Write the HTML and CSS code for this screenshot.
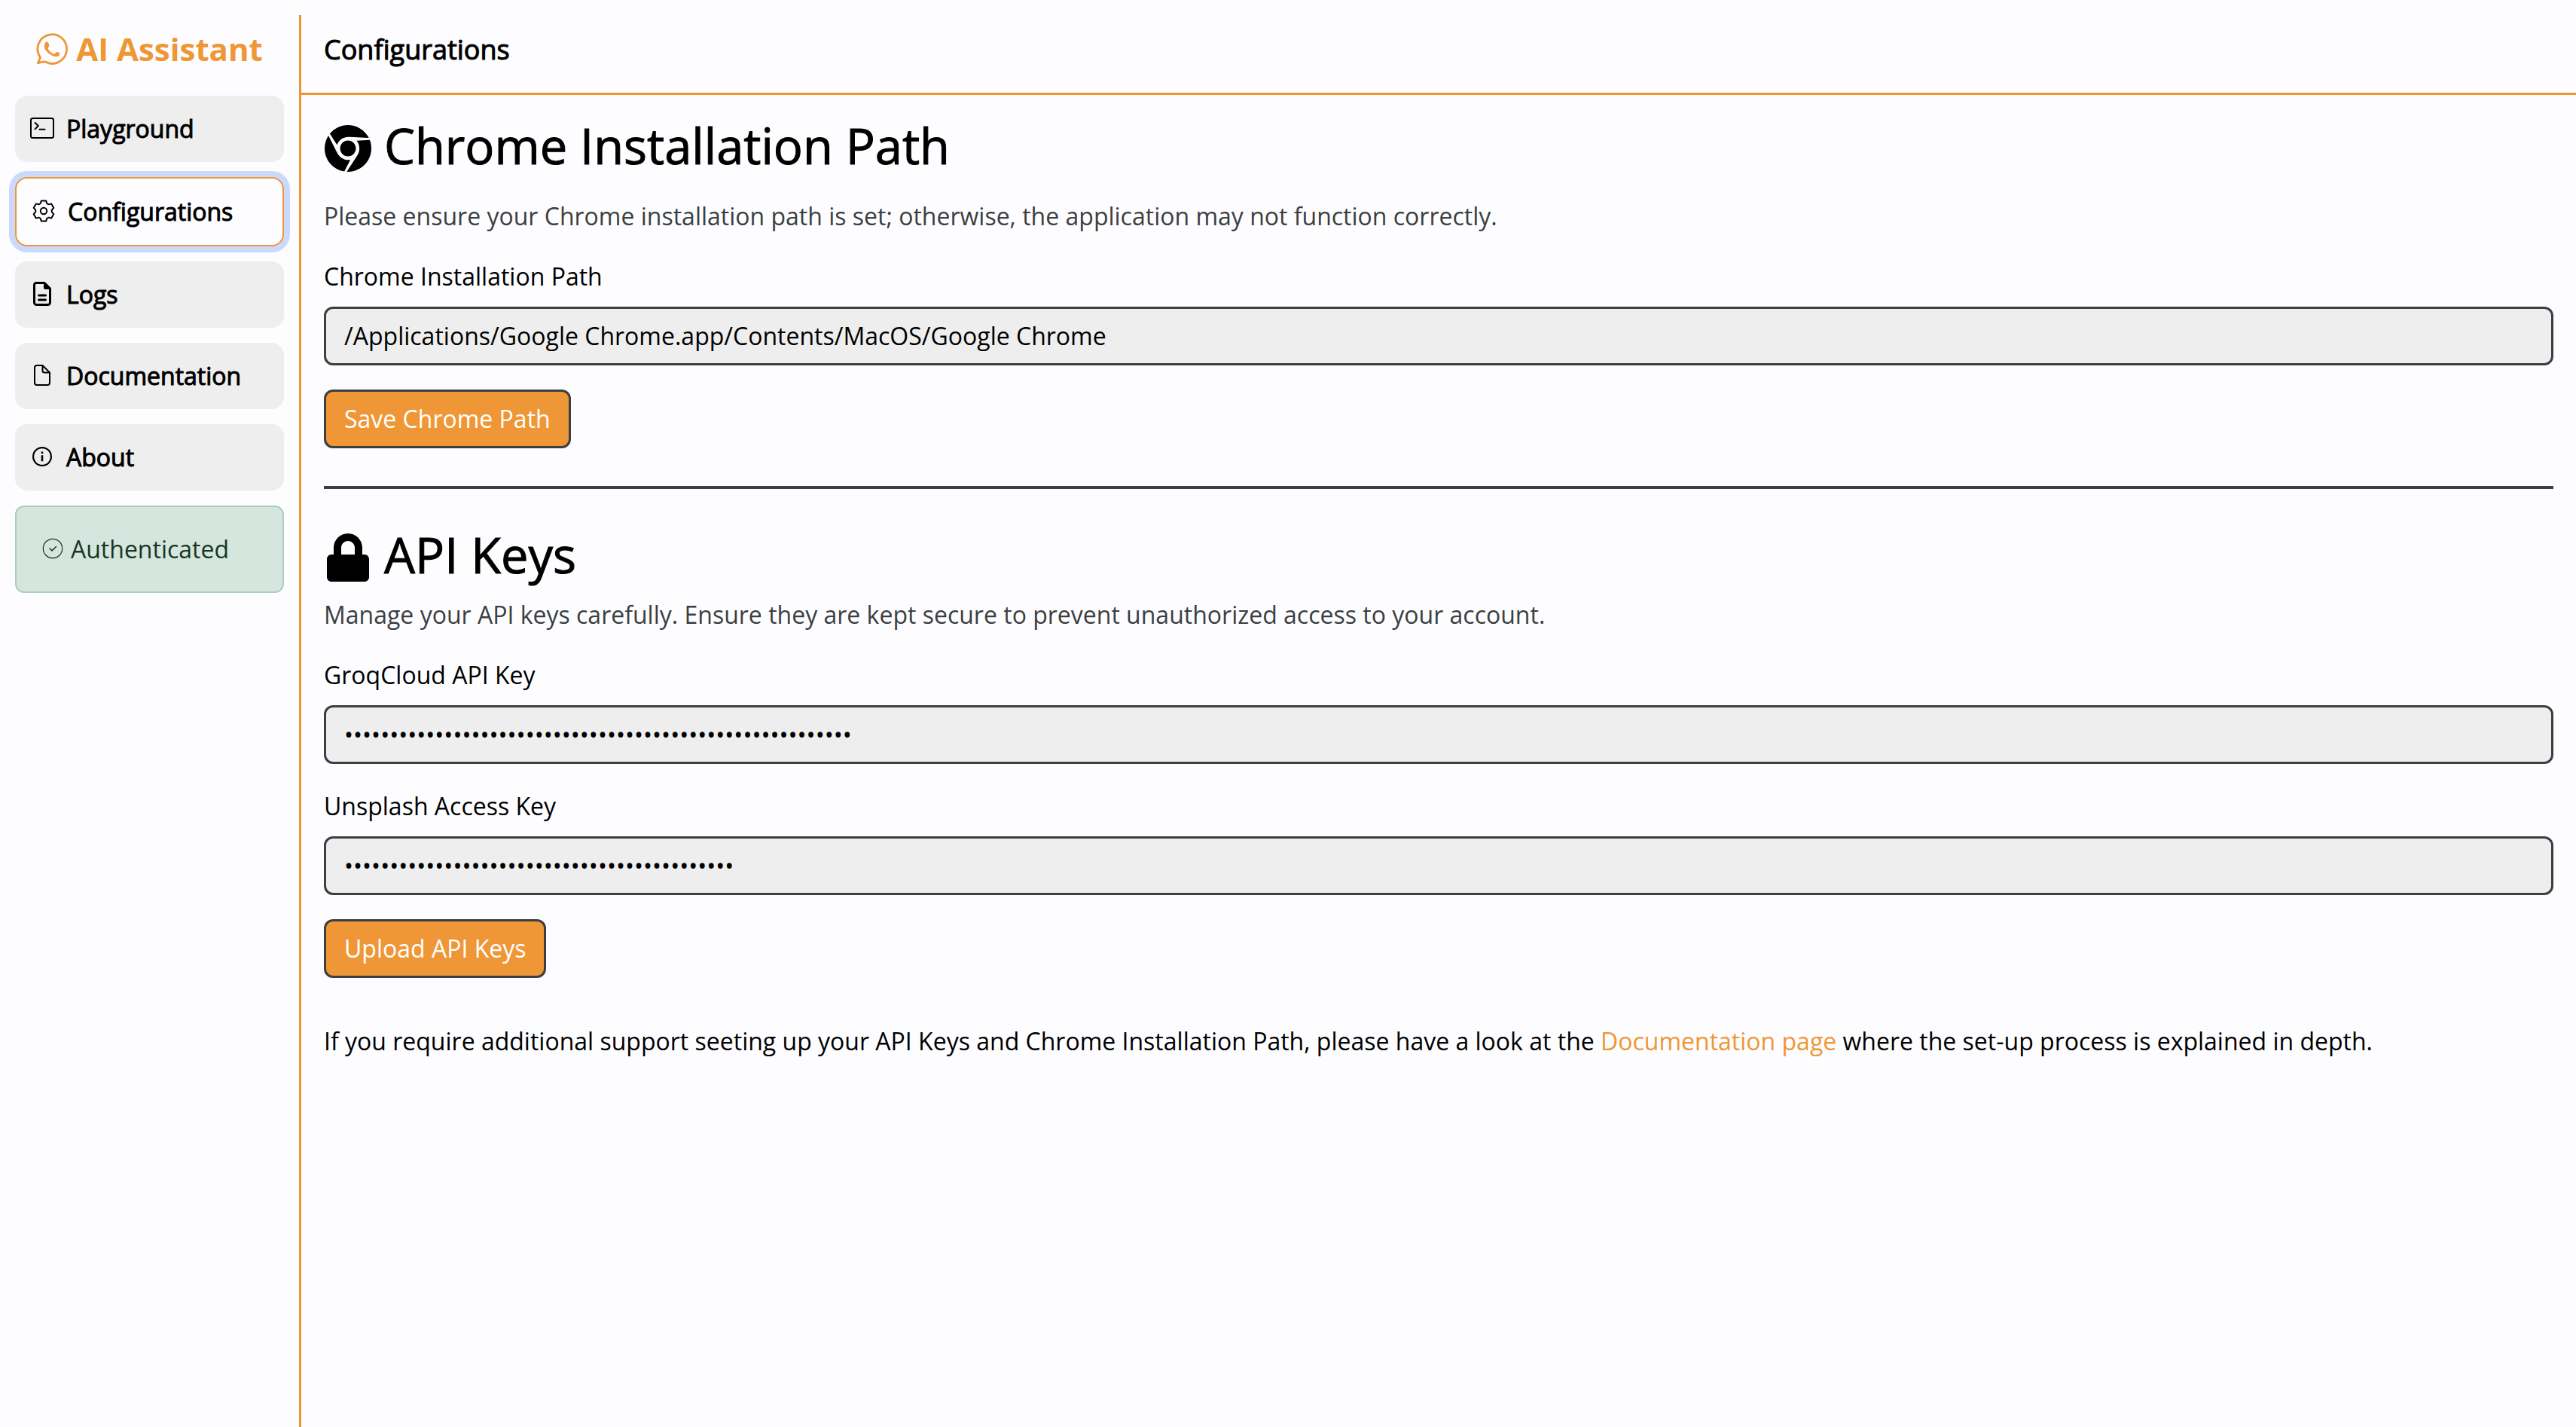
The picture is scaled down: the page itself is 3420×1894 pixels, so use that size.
FILE: index.html
```html
<!DOCTYPE html>
<html lang="en">
<head>
<meta charset="utf-8">
<title>AI Assistant - Configurations</title>
<link rel="stylesheet" href="styles.css">
</head>
<body>
<div class="app">
  <aside class="sidebar">
    <div class="brand">
      <svg class="brand-icon" viewBox="0 0 42 42" aria-hidden="true">
        <path class="line" stroke-width="2.8" d="M5.5 32.2A19.3 19.3 0 1 1 12.2 38.1C10.500 37.300 8.500 37.900 2.300 39.900C4 36 4.900 33.800 5.500 32.200Z"/>
        <path fill="currentColor" d="M11 16.500c.2-2.500 1.400-5 3-5 1.600 0 2 .6 2.600 2.300.6 1.800 1.100 3.400 0 4.800-.9 1-1.200 1.400-.4 2.800 1.700 2.900 4 4.800 7 6 1 .4 1.500.2 2.200-.7 1-1.300 1.600-2.100 2.900-1.600l2.400 1.200c1 .5.6 2.600-.8 3.700-1.900 1.500-4.200 1.500-6.900.5-5.400-2-9-5.400-11.300-9.200-.6-1.300-.9-2.900-.7-4.800z"/>
      </svg>
      <span>AI Assistant</span>
    </div>
    <nav class="menu">
      <button class="menu-item" type="button">
        <svg class="icon" viewBox="0 0 32 32" aria-hidden="true">
          <rect class="line" x="1" y="3" width="30" height="26" rx="2.500"/>
          <path class="line" d="M6.500 9l4.300 4-4.300 4.400M12.500 17.800h7"/>
        </svg>
        <span>Playground</span>
      </button>
      <button class="menu-item menu-item-active" type="button">
        <svg class="icon" viewBox="-16 -16 32 32" aria-hidden="true">
          <path class="line" d="M-4.200-10L-3.200-13.600 3.200-13.600 4.200-10 6.560-8.640 10.200-9.600 13.350-4.100 10.760-1.360V1.360L13.350 4.100 10.200 9.600 6.560 8.640 4.200 10 3.200 13.600-3.200 13.600-4.200 10-6.560 8.640-10.200 9.600-13.350 4.100-10.760 1.360V-1.360L-13.350-4.100-10.200-9.600-6.560-8.640Z"/>
          <circle class="line" r="4.200"/>
        </svg>
        <span>Configurations</span>
      </button>
      <button class="menu-item" type="button">
        <svg class="icon" viewBox="0 0 32 32" aria-hidden="true">
          <path class="line" stroke-width="3" d="M8 1.500H19L26.500 9V27.500a3 3 0 0 1-3 3H8.500a3 3 0 0 1-3-3V4a2.500 2.500 0 0 1 2.500-2.500Z"/>
          <path fill="currentColor" d="M18 1h2l7 7v2h-7a2 2 0 0 1-2-2z"/>
          <path class="line" stroke-width="3" d="M11.500 18h9M11.500 24h9"/>
        </svg>
        <span>Logs</span>
      </button>
      <button class="menu-item" type="button">
        <svg class="icon" viewBox="0 0 32 32" aria-hidden="true">
          <path class="line" d="M9 3H16.500L26 12.500V26a3 3 0 0 1-3 3H9a3 3 0 0 1-3-3V6a3 3 0 0 1 3-3ZM16.500 3v7a2.500 2.500 0 0 0 2.500 2.500h7"/>
        </svg>
        <span>Documentation</span>
      </button>
      <button class="menu-item" type="button">
        <svg class="icon" viewBox="0 0 32 32" aria-hidden="true">
          <circle class="line" cx="16" cy="16" r="11.900" stroke-width="2.200"/>
          <path fill="currentColor" d="M14.700 9.500h2.600v2.600h-2.600zM14.700 14.200h2.600v8h-2.600z"/>
        </svg>
        <span>About</span>
      </button>
    </nav>
    <div class="status" role="status">
      <svg class="icon" viewBox="0 0 32 32" aria-hidden="true">
        <circle class="line" cx="16" cy="16" r="12.700" stroke-width="1.200"/>
        <path class="line" stroke-width="1.500" d="M12 16l3 2.900 5.500-5.400"/>
      </svg>
      <span>Authenticated</span>
    </div>
  </aside>

  <main class="page">
    <header class="page-header">Configurations</header>
    <div class="content">
      <form class="section">
        <h1 class="title title-main">
          <svg class="title-icon" viewBox="0 0 512 512" aria-hidden="true">
            <path fill="currentColor" transform="translate(8 0)" d="M131.500 217.500L55.100 100.100c47.600-59.200 119-91.800 192-92.100 42.300-.3 85.500 10.500 124.800 33.200 43.400 25.200 76.400 61.400 97.400 103L264 133.400c-58.100-3.400-113.400 29.300-132.500 84.100zm32.900 38.500c0 46.200 37.400 83.600 83.600 83.600s83.600-37.400 83.600-83.600-37.400-83.600-83.600-83.600-83.600 37.300-83.600 83.600zm314.900-89.200L339.600 174c37.900 44.300 38.500 108.200 6.600 157.200L234.100 503.600c46.500 2.500 94.400-7.700 137.800-32.900 107.400-62 150.900-192 107.400-303.900zM133.700 303.600L40.400 120.100C14.900 159.100 0 205.900 0 256c0 124 90.800 226.700 209.500 244.900l63.700-124.800c-57.600 10.800-113.200-20.800-139.500-72.500z"/>
          </svg>
          <span>Chrome Installation Path</span>
        </h1>
        <p class="lead">Please ensure your Chrome installation path is set; otherwise, the application may not function correctly.</p>
        <div class="field">
          <label for="chrome-path">Chrome Installation Path</label>
          <input class="input" id="chrome-path" type="text" value="/Applications/Google Chrome.app/Contents/MacOS/Google Chrome">
        </div>
        <button class="button" type="button">Save Chrome Path</button>
      </form>

      <hr class="divider">

      <form class="section">
        <h1 class="title">
          <svg class="title-icon" viewBox="0 0 512 512" aria-hidden="true">
            <path fill="currentColor" transform="translate(32 0)" d="M400 224h-24v-72C376 68.200 307.800 0 224 0S72 68.200 72 152v72H48c-26.500 0-48 21.500-48 48v192c0 26.500 21.500 48 48 48h352c26.500 0 48-21.500 48-48V272c0-26.500-21.500-48-48-48zm-104 0H152v-72c0-39.700 32.300-72 72-72s72 32.300 72 72v72z"/>
          </svg>
          <span>API Keys</span>
        </h1>
        <p class="lead">Manage your API keys carefully. Ensure they are kept secure to prevent unauthorized access to your account.</p>
        <div class="field">
          <label for="groq-key">GroqCloud API Key</label>
          <input class="input" id="groq-key" type="password" autocomplete="off" value="00000000000000000000000000000000000000000000000000000000">
        </div>
        <div class="field">
          <label for="unsplash-key">Unsplash Access Key</label>
          <input class="input" id="unsplash-key" type="password" autocomplete="off" value="0000000000000000000000000000000000000000000">
        </div>
        <button class="button" type="button">Upload API Keys</button>
      </form>

      <p class="support">If you require additional support seeting up your API Keys and Chrome Installation Path, please have a look at the <a class="link" href="#documentation">Documentation page</a> where the set-up process is explained in depth.</p>
    </div>
  </main>
</div>
</body>
</html>
```

FILE: styles.css
```css
:root {
  --accent: #ef9736;
  --ink: #3b3f41;
  --surface: #eeeeee;
  --background: #fdfdff;
}

* {
  box-sizing: border-box;
}

body {
  margin: 0;
  background: var(--background);
  color: #000;
  font-family: "Open Sans", "Noto Sans", sans-serif;
  font-size: 32px;
  line-height: 48px;
}

button,
input {
  font: inherit;
  color: inherit;
}

.line {
  fill: none;
  stroke: currentColor;
  stroke-linecap: round;
  stroke-linejoin: round;
}

.line:not([stroke-width]) {
  stroke-width: 2px;
}

.app {
  display: flex;
  min-height: 100vh;
  padding-top: 20px;
}

.sidebar {
  flex: none;
  width: 397px;
  padding: 0 20px;
}

.brand {
  display: flex;
  align-items: center;
  justify-content: center;
  gap: 11px;
  padding: 15px 0 12px;
  margin-bottom: 20px;
  color: var(--accent);
  font-size: 42px;
  font-weight: 700;
  line-height: 60px;
}

.brand-icon {
  width: 42px;
  height: 42px;
}

.menu {
  display: flex;
  flex-direction: column;
  gap: 20px;
  margin-bottom: 20px;
}

/* Medium weight: the installed family goes from regular to semibold */
.menu-item,
.page-header,
.title {
  font-weight: 500;
  -webkit-text-stroke: 1px currentColor;
}

.menu-item {
  display: flex;
  align-items: center;
  gap: 16px;
  padding: 20px;
  border: 0;
  border-radius: 16px;
  background: var(--surface);
  text-align: left;
}

.menu-item-active {
  border: 2px solid var(--accent);
  background: var(--background);
  box-shadow: 0 0 0 8px #cbd9fd;
}

.icon {
  flex: none;
  width: 32px;
  height: 32px;
  margin-bottom: 2px;
}

.status {
  display: flex;
  align-items: center;
  gap: 8px;
  padding: 32px;
  border: 2px solid #a9cfbc;
  border-radius: 12px;
  background: #d5e6de;
  color: #193624;
}

.page {
  flex: 1;
  min-width: 0;
  border-left: 3px solid var(--accent);
}

.page-header {
  padding: 19px 30px 30px;
  border-bottom: 3px solid var(--accent);
  font-size: 36px;
  line-height: 54px;
}

.content {
  padding: 29px 30px;
}

.title {
  display: flex;
  align-items: center;
  gap: 16px;
  margin: 0 0 17px;
  font-size: 65px;
  line-height: 77px;
}

.title-main {
  margin-bottom: 31px;
}

.title-icon {
  flex: none;
  width: 64px;
  height: 64px;
  margin-top: 7px;
}

.lead {
  margin: 0 0 32px;
  color: var(--ink);
}

.field {
  display: flex;
  flex-direction: column;
  gap: 16px;
  margin-bottom: 32px;
}

.input {
  width: 100%;
  height: 78px;
  padding: 11px 24px 13px;
  border: 3px solid var(--ink);
  border-radius: 12px;
  background: var(--surface);
}

.button {
  display: block;
  padding: 12px 24px;
  border: 3px solid var(--ink);
  border-radius: 12px;
  background: var(--accent);
  color: #fff;
}

.divider {
  height: 4px;
  margin: 50px 0 49px;
  border: 0;
  background: var(--ink);
}

.support {
  margin: 60px 0 0;
}

.link {
  color: var(--accent);
  text-decoration: none;
}
```
